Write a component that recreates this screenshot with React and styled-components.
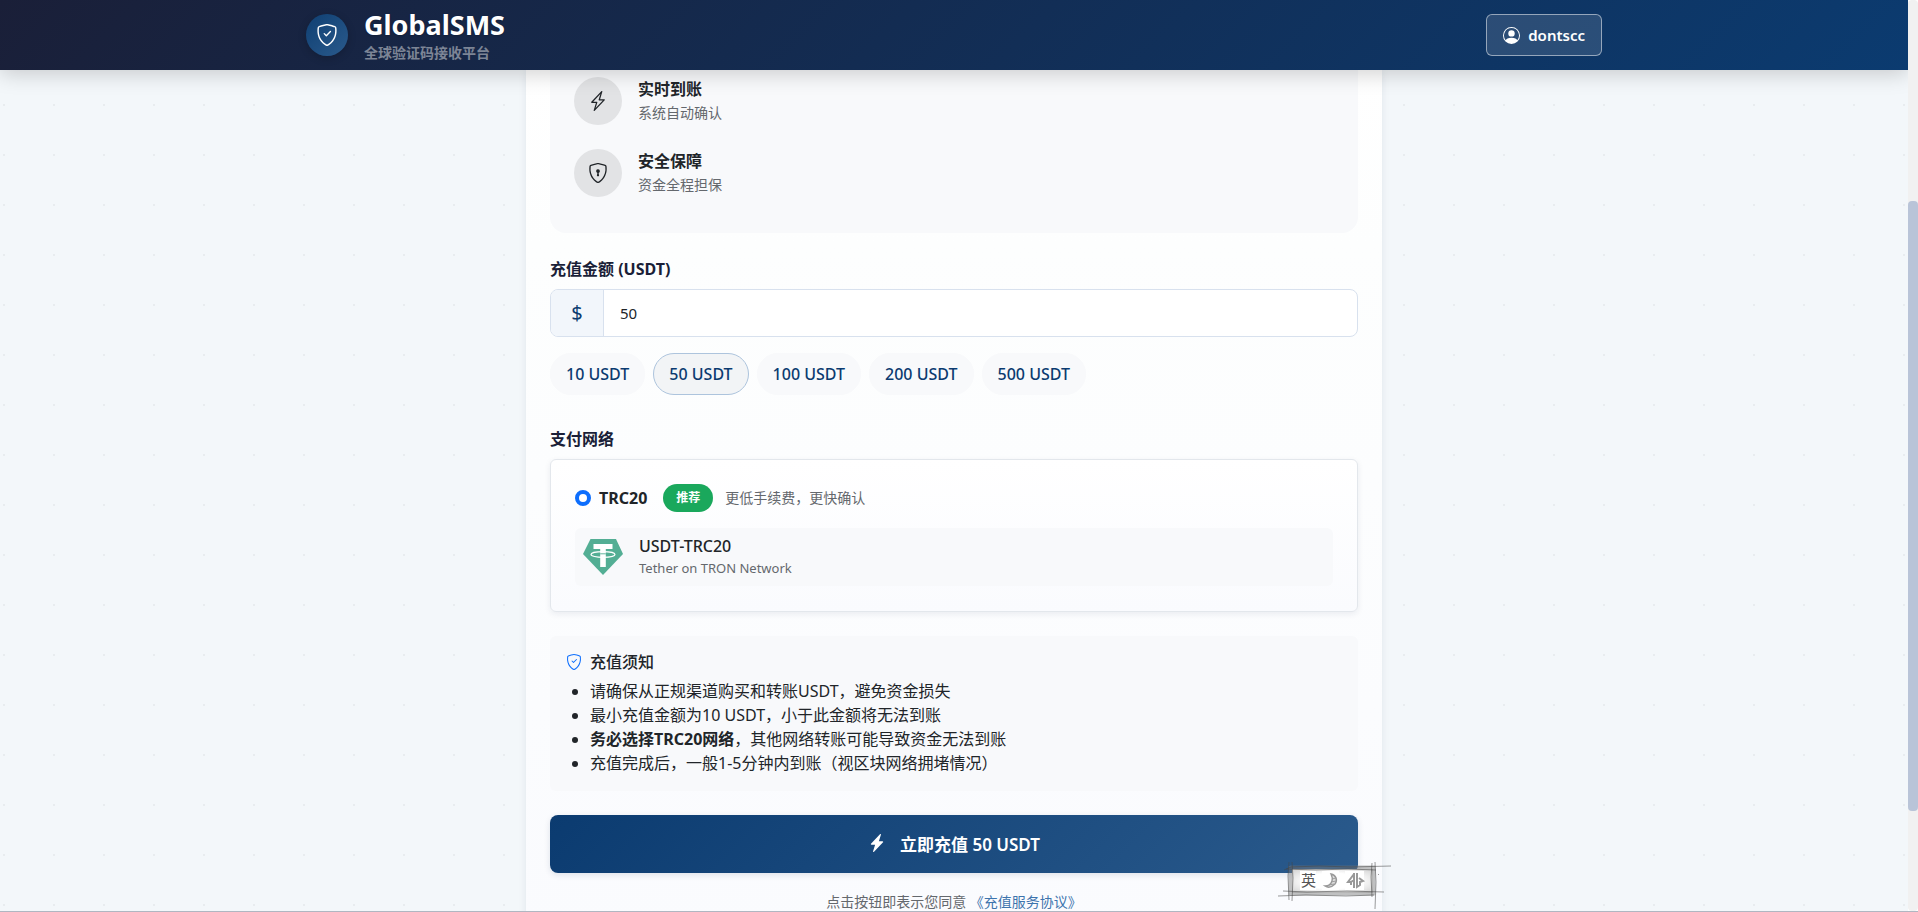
import React, { useState } from 'react';
import styled, { createGlobalStyle } from 'styled-components';
import {
  BsLightningCharge,
  BsLightningChargeFill,
  BsPersonCircle,
  BsShieldCheck,
  BsShieldLock,
} from 'react-icons/bs';

const features = [
  { icon: BsLightningCharge, title: '实时到账', text: '系统自动确认' },
  { icon: BsShieldLock, title: '安全保障', text: '资金全程担保' },
];

const amounts = [10, 50, 100, 200, 500];

const TetherLogo = () => (
  <svg width="40" height="36" viewBox="0 0 40 36" aria-hidden="true">
    <path d="M7.500 0h25.500l7 15-20 21L0 15z" fill="#53ae94" />
    <path d="M10.500 5h19v5h-6.700v18h-5.600V10h-6.700z" fill="#fff" />
    <ellipse cx="20" cy="15.500" rx="12" ry="2.800" fill="none" stroke="#fff" strokeWidth="1.200" />
    <path d="M17.200 14.800h5.600" stroke="#53ae94" strokeWidth="0.900" />
  </svg>
);

const ImeBar = () => (
  <ImeStatus>
    <svg width="114" height="50" viewBox="0 0 114 50" aria-hidden="true">
      <defs>
        <radialGradient id="paper" cx="50%" cy="50%" r="65%">
          <stop offset="0.500" stopColor="#fff" />
          <stop offset="1" stopColor="#d6d6d6" />
        </radialGradient>
      </defs>
      <path d="M14 8h81v24H14z" fill="url(#paper)" />
      <path d="M22 10h16v19H22zM44 10h17v19H44zM67 10h19v19H67z" fill="#fff" />
      <path d="M12 6.500h85M12 32.500h85M12.500 5v29M95.500 5v29" stroke="#777" strokeOpacity="0.450" strokeWidth="4" />
      <g fill="none" stroke="#444" strokeOpacity="0.600" strokeWidth="0.900">
        <path d="M6 9l7-3 28-1 32 1 40-1M8 8l30 1 32-1 28 1" />
        <path d="M5 30l24 1 40-1 37 1M0 35l28-1 40 1 28-1" />
        <path d="M11 1l-1 14 1 24M14 1l1 16-1 23" />
        <path d="M94 2l-1 14 1 20M97 1l1 20-1 27" />
        <path d="M100 13l1 1" />
      </g>
      <path
        d="M53 13c5 1 7 6 4 10-3 3-7 4-10 2 3 0 6-2 7-5s0-5-1-7z"
        fill="#ddd"
        stroke="#999"
        strokeWidth="1.400"
      />
      <path d="M54 18l4-1M53 21l5-1M51 24l5-1" stroke="#999" strokeWidth="0.900" />
      <path
        d="M76 12v15M76 13l-6 8h3v3M76 19l-3 2M79 12v14l3-2v-3l3-1-4-3"
        fill="none"
        stroke="#999"
        strokeWidth="2"
      />
    </svg>
    <ImeText>英</ImeText>
  </ImeStatus>
);

const App = () => {
  const [amount, setAmount] = useState('50');

  return (
    <>
      <GlobalStyle />
      <Viewport>
        <Screen>
          <Header>
            <HeaderInner>
              <Brand href="#">
                <BrandIcon>
                  <BsShieldCheck size={22} />
                </BrandIcon>
                <span>
                  <BrandName>GlobalSMS</BrandName>
                  <BrandText>全球验证码接收平台</BrandText>
                </span>
              </Brand>
              <UserButton type="button">
                <BsPersonCircle size={17} />
                dontscc
              </UserButton>
            </HeaderInner>
          </Header>

          <Card>
            <Features>
              {features.map(({ icon: Icon, title, text }) => (
                <Feature key={title}>
                  <FeatureIcon>
                    <Icon size={20} />
                  </FeatureIcon>
                  <div>
                    <FeatureTitle>{title}</FeatureTitle>
                    <FeatureText>{text}</FeatureText>
                  </div>
                </Feature>
              ))}
            </Features>

            <Section>
              <Label htmlFor="amount">充值金额 (USDT)</Label>
              <InputGroup>
                <Currency>$</Currency>
                <AmountInput
                  id="amount"
                  type="text"
                  inputMode="numeric"
                  value={amount}
                  onChange={(e) => setAmount(e.target.value)}
                />
              </InputGroup>
              <Chips>
                {amounts.map((n) => (
                  <Chip
                    key={n}
                    type="button"
                    $active={String(n) === amount}
                    onClick={() => setAmount(String(n))}
                  >
                    {n} USDT
                  </Chip>
                ))}
              </Chips>
            </Section>

            <Section>
              <Heading>支付网络</Heading>
              <Network>
                <NetworkRow>
                  <Radio id="trc20" type="radio" name="network" defaultChecked />
                  <NetworkName htmlFor="trc20">TRC20</NetworkName>
                  <Badge>推荐</Badge>
                  <Muted>更低手续费，更快确认</Muted>
                </NetworkRow>
                <Token>
                  <TetherLogo />
                  <div>
                    <TokenName>USDT-TRC20</TokenName>
                    <TokenText>Tether on TRON Network</TokenText>
                  </div>
                </Token>
              </Network>
            </Section>

            <Notice>
              <NoticeTitle>
                <BsShieldCheck size={16} color="#0d6efd" />
                充值须知
              </NoticeTitle>
              <NoticeList>
                <li>请确保从正规渠道购买和转账USDT，避免资金损失</li>
                <li>最小充值金额为10 USDT，小于此金额将无法到账</li>
                <li>
                  <strong>务必选择TRC20网络</strong>，其他网络转账可能导致资金无法到账
                </li>
                <li>充值完成后，一般1-5分钟内到账（视区块网络拥堵情况）</li>
              </NoticeList>
            </Notice>

            <Submit type="button">
              <BsLightningChargeFill size={18} />
              <span>立即充值 {amount} USDT</span>
            </Submit>
            <Agreement>
              点击按钮即表示您同意 <a href="#">《充值服务协议》</a>
            </Agreement>
          </Card>
        </Screen>
        <ScrollTrack>
          <ScrollThumb />
        </ScrollTrack>
        <ImeBar />
      </Viewport>
    </>
  );
};

const GlobalStyle = createGlobalStyle`
  * {
    box-sizing: border-box;
  }

  body {
    margin: 0;
    overflow: hidden;
    color: #212529;
    font-family: 'Noto Sans', 'Noto Sans CJK SC', sans-serif;
    font-size: 16px;
    line-height: 24px;
  }

  button,
  input {
    font-family: inherit;
  }
`;

const Viewport = styled.div`
  display: grid;
  grid-template-columns: minmax(0, 1fr) 10px;
  height: 100vh;
  border-bottom: 1px solid #b0b6c1;
  position: relative;
`;

const Screen = styled.div`
  min-height: 0;
  overflow: hidden;
  background-color: #f3f7fa;
  background-image: radial-gradient(#e8ecef 1px, transparent 1px);
  background-size: 50px 50px;
  background-position: -21px -20px;
`;

const Header = styled.header`
  position: relative;
  z-index: 1;
  height: 70px;
  background: linear-gradient(135deg, #1a1f38 0%, #0b3b70 100%);
  box-shadow: 0 4px 20px rgba(0, 0, 0, 0.18);
`;

const HeaderInner = styled.div`
  display: flex;
  align-items: center;
  justify-content: space-between;
  max-width: 1320px;
  height: 100%;
  margin: 0 auto;
  padding: 0 12px;
`;

const Brand = styled.a`
  display: flex;
  align-items: center;
  gap: 16px;
  color: #fff;
  text-decoration: none;
`;

const BrandIcon = styled.span`
  display: flex;
  align-items: center;
  justify-content: center;
  width: 42px;
  height: 42px;
  border-radius: 50%;
  background: linear-gradient(135deg, #0f3f72, #2a5a8c);
  box-shadow: 0 2px 8px rgba(0, 0, 0, 0.2);
`;

const BrandName = styled.span`
  display: block;
  font-size: 27px;
  font-weight: 700;
  line-height: 36px;
  text-shadow: 0 1px 2px rgba(0, 0, 0, 0.2);
`;

const BrandText = styled.span`
  display: block;
  color: #7d8596;
  font-size: 14px;
  font-weight: 600;
  line-height: 20px;
`;

const UserButton = styled.button`
  display: flex;
  align-items: center;
  gap: 8px;
  height: 42px;
  padding: 0 16px;
  border: 1px solid rgba(255, 255, 255, 0.5);
  border-radius: 6px;
  background: rgba(255, 255, 255, 0.12);
  color: #fff;
  font-size: 15px;
  font-weight: 600;
`;

const Card = styled.main`
  max-width: 856px;
  margin: 0 auto;
  padding: 0 24px 24px;
  background: linear-gradient(#fff, #fdfefe 20%, #fafbfe);
  box-shadow: 0 0 8px rgba(20, 40, 80, 0.08);
`;

const Features = styled.section`
  display: grid;
  gap: 24px;
  margin-bottom: 24px;
  padding: 7px 24px 36px;
  border-radius: 0 0 16px 16px;
  background: #f8f9fb;
`;

const Feature = styled.div`
  display: flex;
  align-items: center;
  gap: 16px;
`;

const FeatureIcon = styled.span`
  display: flex;
  align-items: center;
  justify-content: center;
  width: 48px;
  height: 48px;
  border-radius: 50%;
  background: #e2e3e5;
`;

const FeatureTitle = styled.div`
  font-weight: 700;
`;

const FeatureText = styled.div`
  color: #64686d;
  font-size: 14px;
`;

const Section = styled.section`
  margin-bottom: 24px;
`;

const Label = styled.label`
  display: block;
  margin-bottom: 8px;
  color: #1a1f38;
  font-weight: 700;
`;

const Heading = styled.h2`
  margin: 32px 0 8px;
  color: #1a1f38;
  font-size: 16px;
  font-weight: 700;
  line-height: 24px;
`;

const InputGroup = styled.div`
  display: flex;
  height: 48px;
  overflow: hidden;
  border: 1px solid #d8e1ee;
  border-radius: 8px;
  background: #fff;
`;

const Currency = styled.span`
  display: flex;
  align-items: center;
  justify-content: center;
  width: 53px;
  border-right: 1px solid #d8e1ee;
  background: #f2f6fb;
  color: #0b3b70;
  font-size: 20px;
`;

const AmountInput = styled.input`
  flex: 1;
  min-width: 0;
  padding: 0 16px;
  border: none;
  outline: none;
  background: transparent;
  color: #212529;
  font-size: 15px;
`;

const Chips = styled.div`
  display: flex;
  flex-wrap: wrap;
  gap: 8px;
  margin-top: 16px;
`;

const Chip = styled.button`
  height: 42px;
  padding: 0 15px;
  border: 1px solid ${(props) => (props.$active ? '#adc4dd' : '#f8f9fb')};
  border-radius: 21px;
  background: ${(props) => (props.$active ? '#f2f4f6' : '#f8f9fb')};
  color: #0b3b70;
  font-size: 16px;
  font-weight: 500;
`;

const Network = styled.div`
  padding: 24px 24px 25px;
  border: 1px solid #e3e7ec;
  border-radius: 6px;
  background: linear-gradient(#fff, #fafbfe);
  box-shadow: 0 2px 6px rgba(20, 40, 80, 0.08);
`;

const NetworkRow = styled.div`
  display: flex;
  align-items: center;
  height: 28px;
  margin-bottom: 16px;
`;

const Radio = styled.input`
  appearance: none;
  width: 16px;
  height: 16px;
  margin: 0 8px 0 0;
  border: 1px solid #adb5bd;
  border-radius: 50%;
  background: #fff;

  &:checked {
    border: 4px solid #0d6efd;
  }
`;

const NetworkName = styled.label`
  margin-right: 16px;
  font-size: 16px;
  font-weight: 700;
`;

const Badge = styled.span`
  margin-right: 12px;
  padding: 0 13px;
  border-radius: 14px;
  background: #1aa85c;
  color: #fff;
  font-size: 12px;
  font-weight: 700;
  line-height: 28px;
`;

const Muted = styled.span`
  color: #64686d;
  font-size: 14px;
`;

const Token = styled.div`
  display: flex;
  align-items: center;
  gap: 16px;
  height: 58px;
  padding: 0 8px;
  border-radius: 6px;
  background: #f8f9fb;
`;

const TokenName = styled.div`
  font-size: 16px;
  font-weight: 500;
  line-height: 22px;
`;

const TokenText = styled.div`
  color: #64686d;
  font-size: 13px;
  line-height: 22px;
`;

const Notice = styled.section`
  margin-bottom: 24px;
  padding: 14px 16px 16px;
  border-radius: 6px;
  background: #f8f9fb;
`;

const NoticeTitle = styled.h3`
  display: flex;
  align-items: center;
  gap: 8px;
  margin: 0 0 5px;
  font-size: 16px;
  font-weight: 500;
  line-height: 24px;
`;

const NoticeList = styled.ul`
  margin: 0;
  padding: 0 0 0 24px;
`;

const Submit = styled.button`
  display: flex;
  align-items: center;
  justify-content: center;
  gap: 14px;
  width: 100%;
  height: 58px;
  padding: 0 0 2px;
  border: none;
  border-radius: 8px;
  background: linear-gradient(135deg, #0b3b70, #2a5a8c);
  box-shadow: 0 2px 6px rgba(20, 40, 80, 0.12);
  color: #fff;
  font-size: 17px;
  font-weight: 600;
`;

const Agreement = styled.p`
  margin: 17px 0 0;
  color: #64686d;
  font-size: 14px;
  text-align: center;

  a {
    color: #3d74ad;
    text-decoration: none;
  }
`;

const ScrollTrack = styled.div`
  padding-top: 201px;
  border-radius: 4px;
  background: #f1f1f1;
`;

const ScrollThumb = styled.div`
  height: 610px;
  border-radius: 4px;
  background: #b9c4d8;
`;

const ImeStatus = styled.div`
  position: absolute;
  right: 526px;
  bottom: 0;
  width: 114px;
  height: 50px;
`;

const ImeText = styled.span`
  position: absolute;
  top: 9px;
  left: 23px;
  color: #555;
  font-size: 15px;
  line-height: 20px;
`;

export default App;
